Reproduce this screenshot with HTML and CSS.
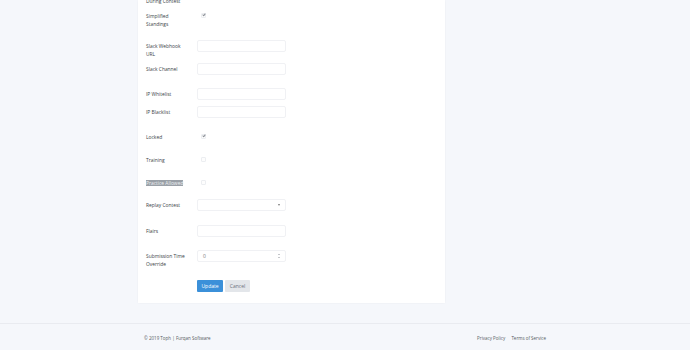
FILE: index.html
```html
<!DOCTYPE html>
<html>
    <head>
        <meta charset="utf-8">
        <meta name="viewport" content="width=device-width,initial-scale=1.0">
        <title>Edit Contest | Toph</title>
        <link rel="stylesheet" href="styles.css">
    </head>
    <body>
        <div class="container">
            <div class="card">
                <form class="form">
                    <div class="row">
                        <label class="label">Freeze Standings During Contest</label>
                        <span class="check on"></span>
                    </div>
                    <div class="row gap-11">
                        <label class="label">Simplified Standings</label>
                        <span class="check on"></span>
                    </div>
                    <div class="row gap-18">
                        <label class="label">Slack Webhook URL</label>
                        <input class="input" type="text">
                    </div>
                    <div class="row gap-11">
                        <label class="label">Slack Channel</label>
                        <input class="input" type="text">
                    </div>
                    <div class="row gap-13">
                        <label class="label">IP Whitelist</label>
                        <input class="input" type="text">
                    </div>
                    <div class="row gap-6">
                        <label class="label">IP Blacklist</label>
                        <input class="input" type="text">
                    </div>
                    <div class="row gap-13">
                        <label class="label">Locked</label>
                        <span class="check on"></span>
                    </div>
                    <div class="row gap-11">
                        <label class="label">Training</label>
                        <span class="check"></span>
                    </div>
                    <div class="row gap-11">
                        <label class="label"><span class="selected">Practice Allowed</span></label>
                        <span class="check"></span>
                    </div>
                    <div class="row gap-10">
                        <label class="label">Replay Contest</label>
                        <div class="input select"><span class="caret"></span></div>
                    </div>
                    <div class="row gap-14">
                        <label class="label">Flairs</label>
                        <input class="input" type="text">
                    </div>
                    <div class="row gap-13">
                        <label class="label">Submission Time Override</label>
                        <div class="input number">0<span class="spin"></span></div>
                    </div>
                    <div class="row gap-18">
                        <span class="label"></span>
                        <div class="actions">
                            <button type="button" class="btn primary">Update</button>
                            <button type="button" class="btn">Cancel</button>
                        </div>
                    </div>
                </form>
            </div>
        </div>
        <footer class="footer">
            <div class="footer-inner">
                <span>&copy; 2019 Toph | Furqan Software</span>
                <span class="links">
                    <a href="#">Privacy Policy</a>
                    <a href="#">Terms of Service</a>
                </span>
            </div>
        </footer>
    </body>
</html>
```

FILE: styles.css
```css
html, body {
    margin: 0;
    padding: 0;
    font-family: "Open Sans", sans-serif;
    font-size: 5px;
    color: #3a3f47;
    background-color: #f5f7fb;
}

.container {
    width: 414px;
    margin: 0 auto;
}

.card {
    width: 307px;
    box-sizing: border-box;
    padding: 0 8px 11px 8px;
    background-color: #fff;
    box-shadow: 0 0 2px rgba(0, 0, 0, 0.05);
    overflow: hidden;
}

.form {
    margin-top: -13px;
}

.row {
    display: flex;
    align-items: flex-start;
    height: 12px;
}

.gap-6 { margin-top: 6px; }
.gap-10 { margin-top: 10px; }
.gap-11 { margin-top: 11px; }
.gap-13 { margin-top: 13px; }
.gap-14 { margin-top: 14px; }
.gap-18 { margin-top: 18px; }

.label {
    flex: 0 0 51px;
    width: 51px;
    padding-top: 2px;
    padding-right: 8px;
    box-sizing: border-box;
    font-size: 4.9px;
    line-height: 8px;
}

.selected {
    background-color: #9aa0a7;
    color: #eef0f2;
}

.check {
    position: relative;
    display: inline-block;
    width: 3px;
    height: 3px;
    margin: 3px 0 0 4px;
    border: 1px solid #eceef1;
    border-radius: 1px;
    background-color: #fdfdfd;
}

.check.on::after {
    content: "";
    position: absolute;
    left: 1px;
    top: -1px;
    width: 1px;
    height: 2px;
    border: solid #8a8f96;
    border-width: 0 1px 1px 0;
    transform: rotate(40deg);
}

.input {
    display: block;
    box-sizing: border-box;
    width: 89px;
    height: 12px;
    margin: 0;
    padding: 0 5px;
    border: 1px solid #f0f1f4;
    border-radius: 2px;
    background-color: #fff;
    font-family: "Open Sans", sans-serif;
    font-size: 5px;
    line-height: 10px;
    color: #777;
    outline: none;
}

.select,
.number {
    position: relative;
}

.caret {
    position: absolute;
    right: 5px;
    top: 4px;
    width: 0;
    height: 0;
    border-left: 1px solid transparent;
    border-right: 1px solid transparent;
    border-top: 2px solid #777;
}

.spin {
    position: absolute;
    right: 5px;
    top: 3px;
    width: 2px;
    height: 4px;
    border-top: 1px solid #c4c6ca;
    border-bottom: 1px solid #c4c6ca;
    box-sizing: border-box;
    background: linear-gradient(#fff 40%, #d4d6d9 40%, #d4d6d9 60%, #fff 60%);
}

.actions {
    display: flex;
    gap: 2px;
}

.btn {
    height: 12px;
    width: 25px;
    padding: 0;
    border: none;
    border-radius: 1px;
    font-family: "Open Sans", sans-serif;
    font-size: 5px;
    line-height: 12px;
    color: #6b717a;
    background-color: #e3e6ea;
    cursor: pointer;
}

.btn.primary {
    width: 26px;
    color: #fff;
    background-color: #3b90d9;
}

.footer {
    margin-top: 20px;
    border-top: 1px solid #e9ebf0;
    height: 27px;
}

.footer-inner {
    width: 402px;
    margin: 0 auto;
    display: flex;
    justify-content: space-between;
    align-items: center;
    height: 27px;
    font-size: 4.5px;
    color: #555b63;
}

.links a {
    color: #555b63;
    text-decoration: none;
    margin-left: 5px;
}
```
